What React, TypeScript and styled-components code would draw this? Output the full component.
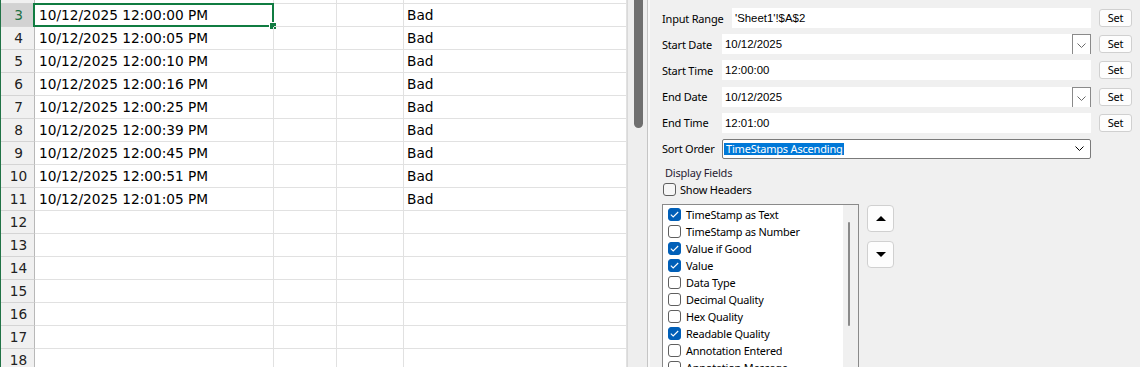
import styled, { createGlobalStyle } from "styled-components"

const GlobalStyle = createGlobalStyle`
    html, body {
        margin: 0;
        padding: 0;
        overflow: hidden;
        background: #fff;
    }
    * {
        box-sizing: border-box;
    }
`

const Window = styled.div`
    display: flex;
    width: 1140px;
    height: 367px;
    overflow: hidden;
`

/* ---------- spreadsheet ---------- */

const Sheet = styled.div`
    width: 627px;
    flex-shrink: 0;
    border-left: 1px solid #217346;
    font-family: "DejaVu Sans", sans-serif;
    font-size: 13.7px;
    color: #000;
    overflow: hidden;
`

const SheetRow = styled.div<{ $partial?: boolean }>`
    display: grid;
    grid-template-columns: 34px 239px 63px 67px 1fr;
    height: ${({ $partial }) => ($partial ? "4px" : "23px")};
`

const RowHead = styled.div<{ $active?: boolean }>`
    background: ${({ $active }) => ($active ? "#d2d2d2" : "#f0f0f0")};
    color: ${({ $active }) => ($active ? "#1e7145" : "#222")};
    border-right: 1px solid #b8b8b8;
    border-bottom: 1px solid #d4d4d4;
    text-align: center;
    line-height: 22px;
    padding-left: 2px;
`

const Cell = styled.div<{ $selected?: boolean; $pad?: number }>`
    position: relative;
    border-right: 1px solid #e1e1e1;
    border-bottom: 1px solid #e1e1e1;
    line-height: 22px;
    padding-left: ${({ $pad }) => $pad ?? 4}px;
    white-space: nowrap;

    ${({ $selected }) =>
        $selected &&
        `
        &::before {
            content: "";
            position: absolute;
            top: -1px;
            left: -2px;
            right: -1px;
            bottom: -1px;
            border: 2px solid #107c41;
            pointer-events: none;
        }
        &::after {
            content: "";
            position: absolute;
            right: -4px;
            bottom: -4px;
            width: 6px;
            height: 6px;
            background: #107c41;
            border: 1px solid #fff;
        }
    `}
`

const SheetScroll = styled.div`
    width: 21px;
    flex-shrink: 0;
    background: #eeeeee;
    border-left: 1px solid #d9d9d9;
    border-right: 1px solid #c5c5c5;
    padding-left: 6px;
`

const ScrollThumb = styled.div`
    width: 9px;
    height: 128px;
    background: #6f6f6f;
    border-radius: 0 0 5px 5px;
`

const Splitter = styled.div`
    width: 2px;
    flex-shrink: 0;
    background: #f8f8f8;
`

/* ---------- side panel ---------- */

const Panel = styled.div`
    flex: 1;
    background: #f0f0f0;
    padding: 8px 8px 0 12px;
    display: flex;
    flex-direction: column;
    font-family: "Noto Sans", sans-serif;
    font-size: 11px;
    letter-spacing: -0.2px;
    color: #000;
    overflow: hidden;
`

const FieldRows = styled.div`
    display: flex;
    flex-direction: column;
    gap: 6.2px;
`

const FieldRow = styled.div`
    display: flex;
    align-items: center;
    height: 20px;
`

const Label = styled.span`
    width: 60px;
    flex-shrink: 0;
    white-space: nowrap;
`

const TextBox = styled.div<{ $indent?: boolean }>`
    flex: 1;
    height: 100%;
    margin-left: ${({ $indent }) => ($indent ? "10px" : "0")};
    background: #fff;
    display: flex;
    align-items: center;
    padding-left: 3px;
    font-family: "Liberation Sans", sans-serif;
    font-size: 11.4px;
    letter-spacing: 0;
    color: #000;
`

const TextValue = styled.span`
    flex: 1;
`

const DropButton = styled.div`
    width: 19px;
    height: 100%;
    border: 1px solid #8a8a8a;
    border-bottom: none;
    display: flex;
    align-items: center;
    justify-content: center;
    padding-top: 2px;
    color: #6a6a6a;
`

const SetButton = styled.button`
    width: 33px;
    height: 18px;
    margin-left: 8px;
    flex-shrink: 0;
    background: #fdfdfd;
    border: 1px solid #d0d0d0;
    border-radius: 3px;
    font-family: "Noto Sans", sans-serif;
    font-size: 11px;
    letter-spacing: -0.2px;
    color: #000;
    padding: 0;
    line-height: 16px;
`

const Combo = styled.div`
    flex: 1;
    height: 100%;
    margin-right: 41px;
    background: #fff;
    border: 1px solid #7a7a7a;
    border-radius: 2px;
    display: flex;
    align-items: center;
    padding: 0 6px 0 1px;
`

const ComboText = styled.span`
    flex: 1;
    display: flex;
`

const Highlight = styled.span`
    background: #0078d7;
    color: #fff;
    line-height: 12px;
    padding: 0 1px 0 2px;
`

const GroupTitle = styled.div`
    margin-top: 6px;
    padding-left: 3px;
    line-height: 15px;
    color: #2a1d33;
`

const CheckRow = styled.label`
    display: flex;
    align-items: center;
    gap: 4px;
    height: 13px;
    margin-top: 3px;
    padding-left: 1px;
`

const Box = styled.span<{ $checked?: boolean; $onPanel?: boolean }>`
    width: 13px;
    height: 13px;
    flex-shrink: 0;
    border-radius: 3px;
    border: 1px solid ${({ $checked }) => ($checked ? "#005fb8" : "#5f5f5f")};
    background: ${({ $checked, $onPanel }) => ($checked ? "#005fb8" : $onPanel ? "#f6f6f6" : "#fff")};
    display: flex;
    align-items: center;
    justify-content: center;
`

const ListArea = styled.div`
    display: flex;
    margin-top: 8px;
    align-items: flex-start;
`

const ListBox = styled.div`
    width: 197px;
    height: 175px;
    flex-shrink: 0;
    border: 1px solid #8a8a8a;
    background: #fff;
    display: flex;
    overflow: hidden;
`

const Items = styled.div`
    flex: 1;
    padding: 1px 0 0 5px;
    display: flex;
    flex-direction: column;
`

const Item = styled.div`
    display: flex;
    align-items: center;
    gap: 5px;
    height: 17px;
    white-space: nowrap;
    font-size: 10.9px;
`

const ListScroll = styled.div`
    width: 15px;
    height: 100%;
    background: #f0f0f0;
    padding: 17px 0 0 5px;
`

const ListThumb = styled.div`
    width: 2px;
    height: 104px;
    background: #8a8a8a;
    border-radius: 1px;
`

const MoveButtons = styled.div`
    display: flex;
    flex-direction: column;
    gap: 9px;
    margin: 1px 0 0 8px;
`

const MoveButton = styled.button`
    width: 27px;
    height: 27px;
    padding: 0;
    background: #fdfdfd;
    border: 1px solid #d0d0d0;
    border-radius: 4px;
    display: flex;
    align-items: center;
    justify-content: center;
`

const Chevron = () => (
    <svg width="9" height="5" viewBox="0 0 9 5" fill="none">
        <polyline points="0.5,0.5 4.5,4.5 8.5,0.5" stroke="currentColor" strokeWidth="1" />
    </svg>
)

const Tick = () => (
    <svg width="9" height="7" viewBox="0 0 9 7" fill="none">
        <polyline points="0.8,3.6 3.2,6 8.2,1" stroke="#fff" strokeWidth="1.1" />
    </svg>
)

const Triangle = ({ up }: { up?: boolean }) => (
    <svg width="10" height="5" viewBox="0 0 10 5">
        <polygon points={up ? "0,5 5,0 10,5" : "0,0 10,0 5,5"} fill="#000" />
    </svg>
)

const stamps = ["12:00:00", "12:00:05", "12:00:10", "12:00:16", "12:00:25", "12:00:39", "12:00:45", "12:00:51", "12:01:05"]

const sheetRows = Array.from({ length: 16 }, (_, i) => {
    const time = stamps[i]
    return {
        n: i + 3,
        a: time ? `10/12/2025 ${time} PM` : "",
        d: time ? "Bad" : "",
    }
})

const fields = [
    { name: "Input Range", value: "'Sheet1'!$A$2", indent: true },
    { name: "Start Date", value: "10/12/2025", drop: true },
    { name: "Start Time", value: "12:00:00" },
    { name: "End Date", value: "10/12/2025", drop: true },
    { name: "End Time", value: "12:01:00" },
]

const displayFields = [
    { name: "TimeStamp as Text", checked: true },
    { name: "TimeStamp as Number", checked: false },
    { name: "Value if Good", checked: true },
    { name: "Value", checked: true },
    { name: "Data Type", checked: false },
    { name: "Decimal Quality", checked: false },
    { name: "Hex Quality", checked: false },
    { name: "Readable Quality", checked: true },
    { name: "Annotation Entered", checked: false },
    { name: "Annotation Message", checked: false },
]

const App = () => {
    return (
        <>
            <GlobalStyle />
            <Window>
                <Sheet>
                    <SheetRow $partial>
                        <RowHead />
                        <Cell />
                        <Cell />
                        <Cell />
                        <Cell />
                    </SheetRow>
                    {sheetRows.map((row) => (
                        <SheetRow key={row.n}>
                            <RowHead $active={row.n === 3}>{row.n}</RowHead>
                            <Cell $selected={row.n === 3}>{row.a}</Cell>
                            <Cell />
                            <Cell />
                            <Cell $pad={3}>{row.d}</Cell>
                        </SheetRow>
                    ))}
                </Sheet>
                <SheetScroll>
                    <ScrollThumb />
                </SheetScroll>
                <Splitter />

                <Panel>
                    <FieldRows>
                        {fields.map((f) => (
                            <FieldRow key={f.name}>
                                <Label>{f.name}</Label>
                                <TextBox $indent={f.indent}>
                                    <TextValue>{f.value}</TextValue>
                                    {f.drop && (
                                        <DropButton>
                                            <Chevron />
                                        </DropButton>
                                    )}
                                </TextBox>
                                <SetButton>Set</SetButton>
                            </FieldRow>
                        ))}
                        <FieldRow>
                            <Label>Sort Order</Label>
                            <Combo>
                                <ComboText>
                                    <Highlight>TimeStamps Ascending</Highlight>
                                </ComboText>
                                <Chevron />
                            </Combo>
                        </FieldRow>
                    </FieldRows>

                    <GroupTitle>Display Fields</GroupTitle>
                    <CheckRow>
                        <Box $onPanel />
                        Show Headers
                    </CheckRow>

                    <ListArea>
                        <ListBox>
                            <Items>
                                {displayFields.map((f) => (
                                    <Item key={f.name}>
                                        <Box $checked={f.checked}>{f.checked && <Tick />}</Box>
                                        {f.name}
                                    </Item>
                                ))}
                            </Items>
                            <ListScroll>
                                <ListThumb />
                            </ListScroll>
                        </ListBox>
                        <MoveButtons>
                            <MoveButton>
                                <Triangle up />
                            </MoveButton>
                            <MoveButton>
                                <Triangle />
                            </MoveButton>
                        </MoveButtons>
                    </ListArea>
                </Panel>
            </Window>
        </>
    )
}

export default App
